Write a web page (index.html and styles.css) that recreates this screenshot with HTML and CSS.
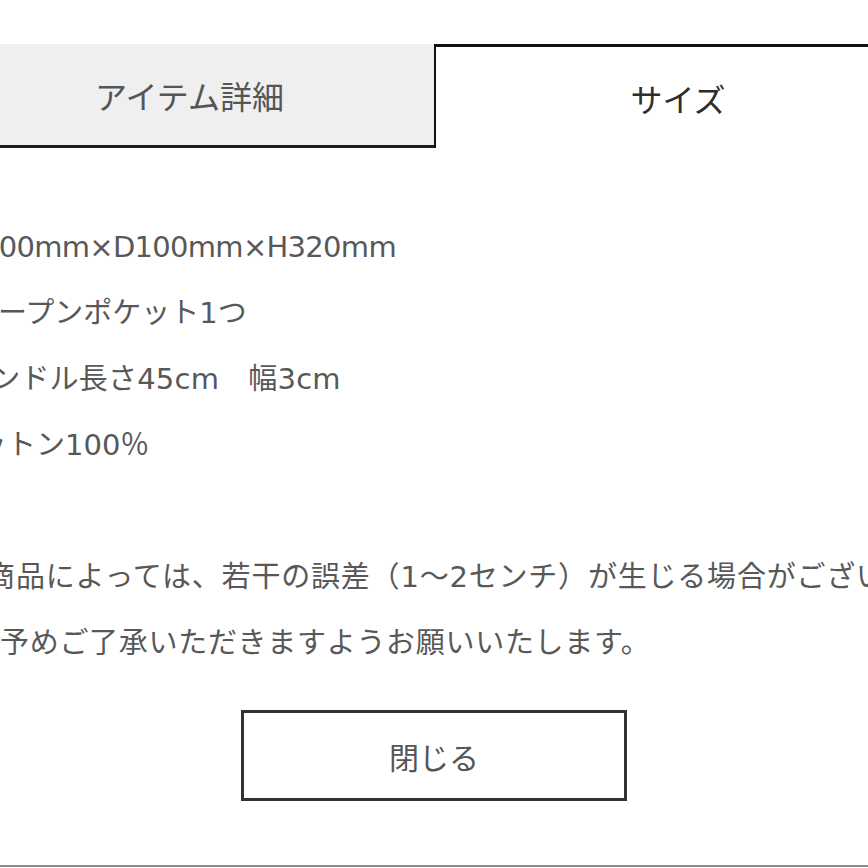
FILE: index.html
```html
<!DOCTYPE html>
<html lang="ja">
<head>
<meta charset="utf-8">
<link rel="stylesheet" href="styles.css">
</head>
<body>
<div class="page">
  <div class="tabs">
    <div class="tab tab-inactive">アイテム詳細</div>
    <div class="tab tab-active">サイズ</div>
  </div>
  <div class="content">
    <p class="line line-size">W300mm×D100mm×H320mm</p>
    <p class="line">オープンポケット1つ</p>
    <p class="line line-handle">ハンドル長さ45cm　幅3cm</p>
    <p class="line line-material">コットン100％</p>
    <p class="line blank">&nbsp;</p>
    <p class="line line-note">※商品によっては、若干の誤差（1〜2センチ）が生じる場合がございます。</p>
    <p class="line line-note2">予めご了承いただきますようお願いいたします。</p>
  </div>
  <div class="actions">
    <button class="close-btn" type="button">閉じる</button>
  </div>
  <div class="footer-line"></div>
</div>
</body>
</html>
```

FILE: styles.css
```css
html, body {
  margin: 0;
  padding: 0;
  background: #ffffff;
  overflow: hidden;
}
body {
  width: 868px;
  height: 868px;
  font-family: "Noto Sans CJK JP", "Noto Sans", sans-serif;
}
.page {
  width: 975px;
  margin-left: -55px;
  padding-top: 44px;
}
.tabs {
  display: flex;
  height: 104px;
}
.tab {
  box-sizing: border-box;
  display: flex;
  align-items: center;
  justify-content: center;
  font-size: 32px;
  height: 104px;
}
.tab-inactive {
  width: 489px;
  background: #efefef;
  color: #555555;
  border-bottom: 3px solid #1e1e1e;
}
.tab-active {
  flex: 1;
  background: #ffffff;
  color: #2e2e2e;
  border-top: 3px solid #111111;
  border-left: 2px solid #111111;
}
.content {
  padding: 66px 0 0 24px;
  color: #585858;
  font-family: "DejaVu Sans", "Noto Sans CJK JP", sans-serif;
  font-size: 29px;
}
.line {
  margin: 0;
  line-height: 66px;
  height: 66px;
  white-space: nowrap;
}
.line-size {
  margin-left: -16px;
  letter-spacing: -0.7px;
}
.line-handle {
  margin-left: -7px;
  letter-spacing: 0.2px;
}
.line-material {
  margin-left: -20px;
}
.line-note {
  margin-left: -8px;
  letter-spacing: 0.8px;
}
.line-note2 {
  margin-left: 31px;
  letter-spacing: 0.7px;
}
.actions {
  display: flex;
  justify-content: center;
  padding-top: 34px;
}
.close-btn {
  width: 386px;
  height: 91px;
  box-sizing: border-box;
  border: 3px solid #333333;
  background: #ffffff;
  color: #555555;
  font-family: "Noto Sans CJK JP", "Noto Sans", sans-serif;
  font-size: 30px;
  padding: 0;
  margin-left: 3px;
}
.footer-line {
  margin-top: 64px;
  height: 2px;
  background: #8a8a8a;
}
```
